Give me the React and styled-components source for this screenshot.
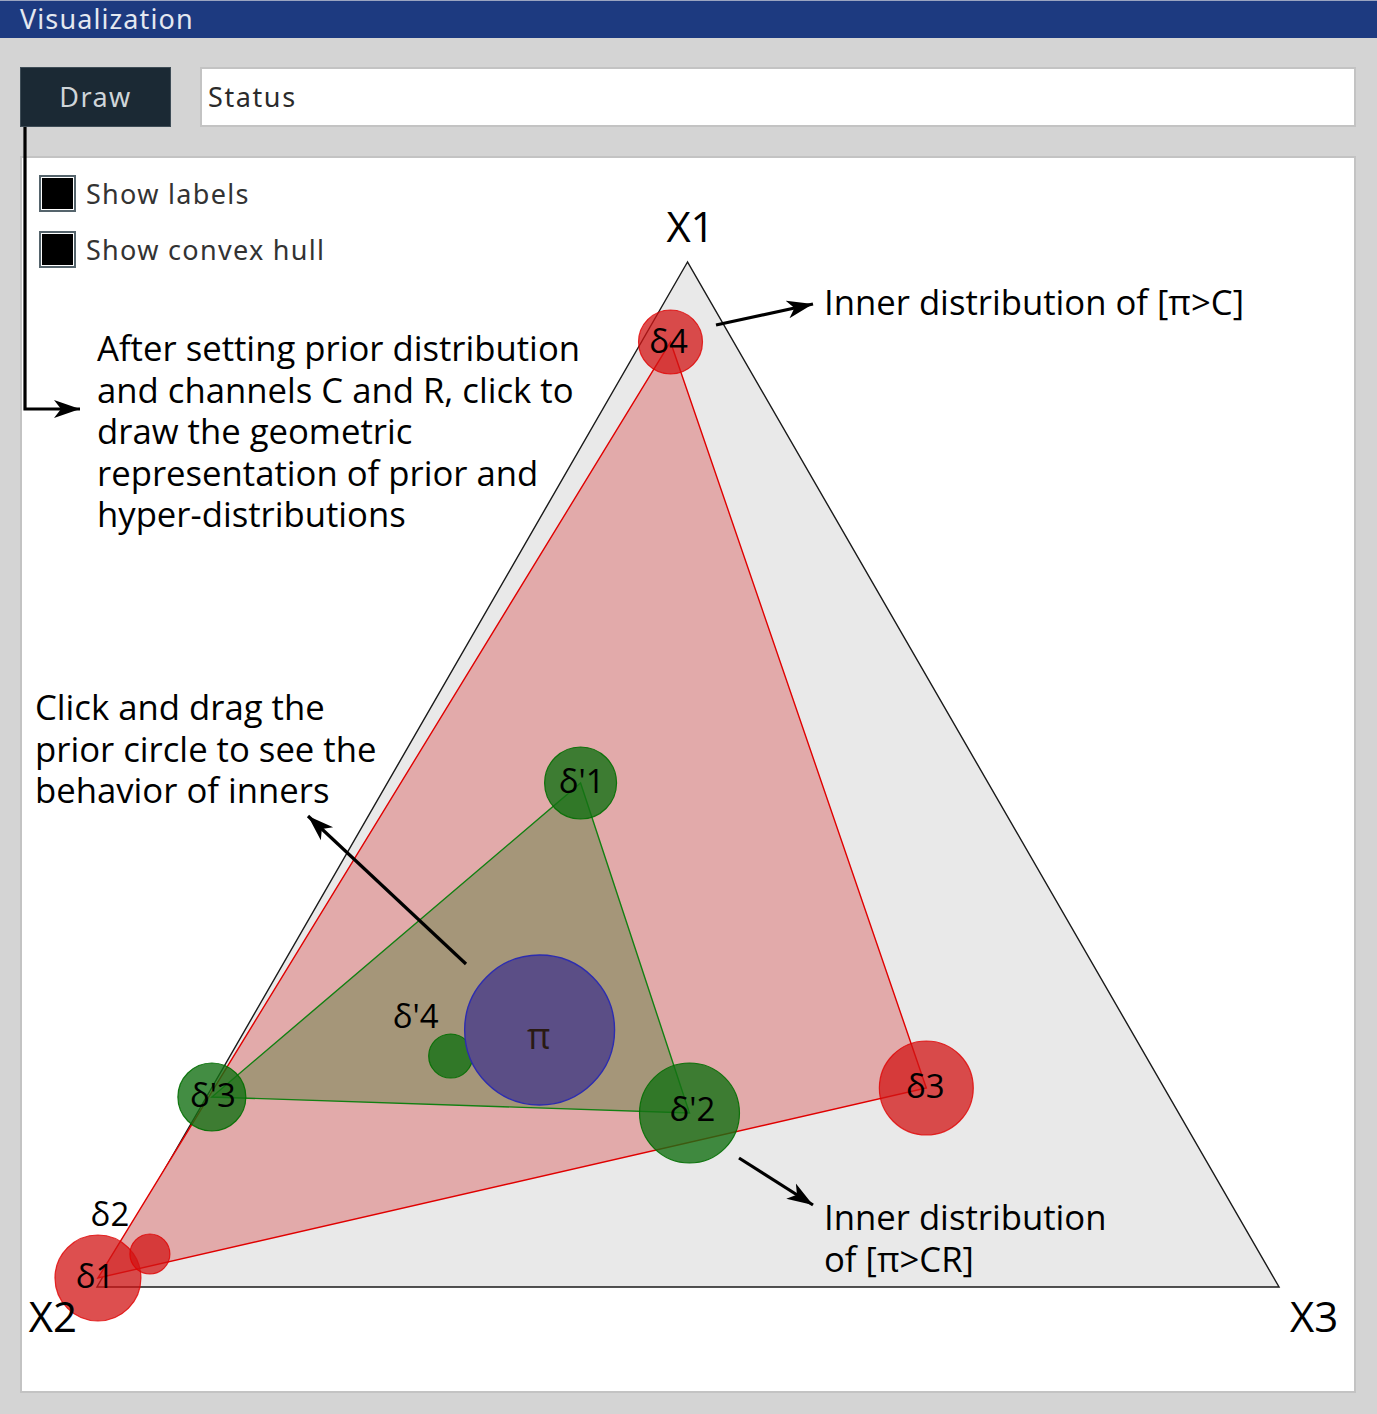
import React from 'react';
import styled, { createGlobalStyle } from 'styled-components';

const GlobalStyle = createGlobalStyle`
  html, body {
    margin: 0;
    padding: 0;
    background: #d4d4d4;
  }
`;

const Window = styled.div`
  width: 1377px;
  height: 1414px;
  position: relative;
  display: flex;
  flex-direction: column;
  background: #d4d4d4;
  font-family: "Noto Sans", "Open Sans", sans-serif;
  overflow: hidden;
`;

const TitleBar = styled.div`
  height: 38px;
  display: flex;
  align-items: center;
  padding: 0 0 3px 20px;
  background: #1d3a80;
  color: #e4e8f0;
  font-size: 27px;
  letter-spacing: 1.1px;
  border-top: 1px solid #9aa4c0;
  box-sizing: border-box;
`;

const Body = styled.div`
  flex: 1;
  display: flex;
  flex-direction: column;
  gap: 29px;
  padding: 29px 21px 21px 20px;
  min-height: 0;
`;

const Toolbar = styled.div`
  display: flex;
  gap: 29px;
  height: 60px;
`;

const DrawButton = styled.button`
  width: 151px;
  height: 100%;
  background: #1b2934;
  border: 1px solid #3e4c56;
  color: #cfd5d9;
  font-family: inherit;
  font-size: 27px;
  letter-spacing: 1.4px;
  padding: 0 0 2px;
  cursor: pointer;
`;

const StatusField = styled.div`
  flex: 1;
  display: flex;
  align-items: center;
  padding: 0 0 2px 6px;
  background: #fff;
  border: 2px solid #c3c3c3;
  color: #2b2b2b;
  font-size: 27px;
  letter-spacing: 1.6px;
`;

const Panel = styled.div`
  flex: 1;
  position: relative;
  background: #fff;
  border: 2px solid #c3c3c3;
`;

const Canvas = styled.svg`
  position: absolute;
  inset: 0;
  width: 100%;
  height: 100%;
`;

const Options = styled.div`
  position: relative;
  display: flex;
  flex-direction: column;
  gap: 20px;
  padding: 17px 0 0 17px;
`;

const Option = styled.label`
  display: flex;
  align-items: center;
  gap: 10px;
  height: 36px;
  color: #333;
  font-size: 27px;
  letter-spacing: 1.3px;
`;

const Box = styled.span`
  width: 33px;
  height: 33px;
  box-sizing: content-box;
  border: 2px solid #55646c;
  background: ${p => (p.$checked ? '#000' : '#fff')};
  box-shadow: inset 0 0 0 1px #fff;
`;

const Overlay = styled.svg`
  position: absolute;
  left: 0;
  top: 0;
  width: 1377px;
  height: 1414px;
  pointer-events: none;
`;

const Callout = styled.div`
  position: absolute;
  left: ${p => p.$x}px;
  top: ${p => p.$y}px;
  font-family: "Open Sans", sans-serif;
  font-size: 34.7px;
  line-height: 41.5px;
  color: #000;
  white-space: nowrap;
  pointer-events: none;
`;

// page coordinates of the simplex and the distributions
const X1 = [688, 262];
const X2 = [97, 1287];
const X3 = [1280, 1287];

const outer = [
  { x: 98, y: 1278, r: 43, label: 'δ1', lx: 95, ly: 1276 },
  { x: 150, y: 1254, r: 20, label: 'δ2', lx: 110, ly: 1214 },
  { x: 927, y: 1088, r: 47, label: 'δ3', lx: 926, ly: 1086 },
  { x: 671, y: 342, r: 32, label: 'δ4', lx: 669, ly: 341 },
];

const inner = [
  { x: 581, y: 783, r: 36, label: "δ'1", lx: 582, ly: 780 },
  { x: 690, y: 1113, r: 50, label: "δ'2", lx: 693, ly: 1109 },
  { x: 212, y: 1097, r: 34, label: "δ'3", lx: 213, ly: 1095 },
  { x: 451, y: 1056, r: 22, label: "δ'4", lx: 416, ly: 1016 },
];

const pts = list => list.map(p => p.join(',')).join(' ');

const Label = ({ x, y, size = 33, color = '#000', children }) => (
  <text
    x={x}
    y={y}
    fontFamily='"Open Sans", sans-serif'
    fontSize={size}
    fill={color}
    textAnchor="middle"
    dominantBaseline="central"
  >
    {children}
  </text>
);

const Diagram = () => (
  <Canvas viewBox="0 0 1333 1233" preserveAspectRatio="none">
    <g transform="translate(-22,-158)">
      <polygon points={pts([X1, X2, X3])} fill="#e9e9e9" stroke="#1a1a1a" strokeWidth="1.4" />
      <polygon
        points={pts([[671, 342], [927, 1088], [98, 1278]])}
        fill="#e2aaaa"
        stroke="#e00000"
        strokeWidth="1.4"
      />
      <polygon
        points={pts([[581, 783], [690, 1113], [212, 1097]])}
        fill="#a59679"
        stroke="#128012"
        strokeWidth="1.4"
      />
      {outer.map(c => (
        <circle key={c.label} cx={c.x} cy={c.y} r={c.r} fill="rgba(210,20,20,0.75)" stroke="rgba(225,0,0,0.8)" strokeWidth="1.2" />
      ))}
      {inner.map(c => (
        <circle key={c.label} cx={c.x} cy={c.y} r={c.r} fill="rgba(20,112,20,0.8)" stroke="rgba(0,110,0,0.9)" strokeWidth="1.2" />
      ))}
      <circle cx="540" cy="1030" r="75" fill="#5b4e86" stroke="#2c2cb0" strokeWidth="1.4" />

      <Label x={691} y={226} size={42}>X1</Label>
      <Label x={53} y={1316} size={42}>X2</Label>
      <Label x={1315} y={1316} size={42}>X3</Label>
      {[...outer, ...inner].map(c => (
        <Label key={c.label} x={c.lx} y={c.ly}>{c.label}</Label>
      ))}
      <Label x={539} y={1035} size={36} color="#2a1a14">π</Label>
    </g>
  </Canvas>
);

const Arrows = () => (
  <Overlay viewBox="0 0 1377 1414">
    <defs>
      <marker id="head" markerUnits="userSpaceOnUse" markerWidth="28" markerHeight="22" refX="26" refY="10" orient="auto">
        <path d="M0,1 L26,10 L0,19 L7,10 Z" fill="#000" />
      </marker>
    </defs>
    <g stroke="#000" strokeWidth="3.2" fill="none">
      <polyline points="25,127 25,409 80,409" markerEnd="url(#head)" />
      <line x1="716" y1="325" x2="813" y2="304" markerEnd="url(#head)" />
      <line x1="466" y1="964" x2="308" y2="816" markerEnd="url(#head)" />
      <line x1="739" y1="1158" x2="813" y2="1205" markerEnd="url(#head)" />
    </g>
  </Overlay>
);

export default function App() {
  return (
    <>
      <GlobalStyle />
      <Window>
        <TitleBar>Visualization</TitleBar>
        <Body>
          <Toolbar>
            <DrawButton>Draw</DrawButton>
            <StatusField>Status</StatusField>
          </Toolbar>
          <Panel>
            <Diagram />
            <Options>
              <Option>
                <Box $checked />
                Show labels
              </Option>
              <Option>
                <Box $checked />
                Show convex hull
              </Option>
            </Options>
          </Panel>
        </Body>
        <Arrows />
        <Callout $x={824} $y={281}>Inner distribution of [π&gt;C]</Callout>
        <Callout $x={97} $y={327}>
          After setting prior distribution
          <br />
          and channels C and R, click to
          <br />
          draw the geometric
          <br />
          representation of prior and
          <br />
          hyper-distributions
        </Callout>
        <Callout $x={35} $y={686}>
          Click and drag the
          <br />
          prior circle to see the
          <br />
          behavior of inners
        </Callout>
        <Callout $x={824} $y={1196}>
          Inner distribution
          <br />
          of [π&gt;CR]
        </Callout>
      </Window>
    </>
  );
}
